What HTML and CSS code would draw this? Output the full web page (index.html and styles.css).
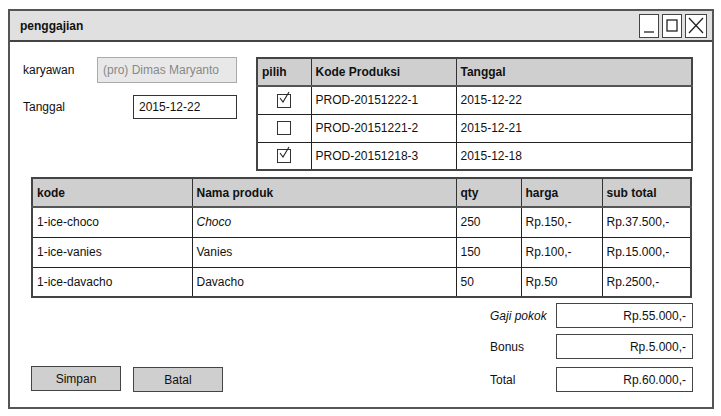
FILE: index.html
```html
<!DOCTYPE html>
<html>
<head>
<meta charset="utf-8">
<link rel="stylesheet" href="styles.css">
</head>
<body>
<div class="window">
  <div class="titlebar">
    <span class="title">penggajian</span>
    <div class="winbtns">
      <span class="wb"><svg width="18" height="21" viewBox="0 0 18 21"><line x1="4" y1="17" x2="14" y2="17" stroke="#222" stroke-width="1.3"/></svg></span>
      <span class="wb"><svg width="18" height="21" viewBox="0 0 18 21"><rect x="4" y="5" width="10" height="11" fill="none" stroke="#222" stroke-width="1.3"/></svg></span>
      <span class="wb"><svg width="20" height="21" viewBox="0 0 20 21"><path d="M3 3 L17 18 M17 3 L3 18" stroke="#222" stroke-width="1.3" fill="none"/></svg></span>
    </div>
  </div>
  <div class="content">
    <div class="top">
      <div class="form">
        <div class="frow r1">
          <span class="lbl">karyawan</span>
          <span class="input disabled">(pro) Dimas Maryanto</span>
        </div>
        <div class="frow r2">
          <span class="lbl">Tanggal</span>
          <span class="input date">2015-12-22</span>
        </div>
      </div>
      <table class="grid t1">
        <colgroup><col class="c-pilih"><col class="c-kode"><col></colgroup>
        <thead><tr><th>pilih</th><th>Kode Produksi</th><th>Tanggal</th></tr></thead>
        <tbody>
          <tr><td class="cb"><span class="check on"><svg width="13" height="13" viewBox="0 0 13 13"><path d="M2 7 L5 11 L11 1" fill="none" stroke="#222" stroke-width="1.1"/></svg></span></td><td>PROD-20151222-1</td><td>2015-12-22</td></tr>
          <tr><td class="cb"><span class="check"></span></td><td>PROD-20151221-2</td><td>2015-12-21</td></tr>
          <tr><td class="cb"><span class="check on"><svg width="13" height="13" viewBox="0 0 13 13"><path d="M2 7 L5 11 L11 1" fill="none" stroke="#222" stroke-width="1.1"/></svg></span></td><td>PROD-20151218-3</td><td>2015-12-18</td></tr>
        </tbody>
      </table>
    </div>
    <table class="grid t2">
      <colgroup><col class="c-k"><col class="c-n"><col class="c-q"><col class="c-h"><col></colgroup>
      <thead><tr><th>kode</th><th>Nama produk</th><th>qty</th><th>harga</th><th>sub total</th></tr></thead>
      <tbody>
        <tr><td>1-ice-choco</td><td><i>Choco</i></td><td>250</td><td>Rp.150,-</td><td>Rp.37.500,-</td></tr>
        <tr><td>1-ice-vanies</td><td>Vanies</td><td>150</td><td>Rp.100,-</td><td>Rp.15.000,-</td></tr>
        <tr><td>1-ice-davacho</td><td>Davacho</td><td>50</td><td>Rp.50</td><td>Rp.2500,-</td></tr>
      </tbody>
    </table>
    <div class="bottom">
      <div class="buttons">
        <span class="btn">Simpan</span>
        <span class="btn b2">Batal</span>
      </div>
      <div class="summary">
        <div class="srow"><span class="slbl"><i>Gaji pokok</i></span><span class="sbox">Rp.55.000,-</span></div>
        <div class="srow"><span class="slbl">Bonus</span><span class="sbox">Rp.5.000,-</span></div>
        <div class="srow"><span class="slbl">Total</span><span class="sbox">Rp.60.000,-</span></div>
      </div>
    </div>
  </div>
</div>
</body>
</html>
```
FILE: styles.css
```css
* { box-sizing: border-box; }
body {
  margin: 0;
  background: #fff;
  font-family: "Liberation Sans", Arial, sans-serif;
  font-size: 12px;
  color: #111;
}
.window {
  margin: 9px 0 0 8px;
  width: 706px;
  height: 400px;
  border: 2px solid #555;
  display: flex;
  flex-direction: column;
}
.titlebar {
  height: 31px;
  background: #e0e0e0;
  border-bottom: 2px solid #444;
  display: flex;
  align-items: center;
  justify-content: space-between;
  padding: 0 5px 0 10px;
}
.title { font-weight: bold; font-size: 12px; }
.winbtns { display: flex; gap: 3px; }
.wb {
  display: flex;
  border: 1.5px solid #444;
  background: #fff;
  height: 24px;
  align-items: center;
  justify-content: center;
}
.content {
  padding: 15px 0 0 0;
  display: flex;
  flex-direction: column;
}
.top { display: flex; }
.form {
  width: 246px;
  padding-left: 13px;
}
.frow { display: flex; align-items: center; justify-content: space-between; width: 214px; }
.r1 { height: 26px; }
.r2 { height: 24px; margin-top: 12px; }
.input {
  display: flex;
  align-items: center;
  border: 1.5px solid #333;
  padding-left: 5px;
  height: 100%;
}
.input.disabled {
  width: 140px;
  background: #e8e8e8;
  border-color: #aaa;
  color: #888;
}
.input.date { width: 104px; }
.grid {
  border-collapse: collapse;
  border: 2px solid #444;
  table-layout: fixed;
}
.grid th {
  background: #cfcfcf;
  font-weight: bold;
  text-align: left;
  padding: 0 4px;
  border: 1px solid #333;
  border-bottom: 2px solid #555;
}
.grid td {
  padding: 0 4px;
  border: 1px solid #222;
}
.t1 { width: 437px; }
.t1 th { height: 28px; }
.t1 td { height: 28px; }
.c-pilih { width: 54px; }
.c-kode { width: 145px; }
.cb { text-align: center; }
.check {
  display: inline-block;
  width: 14px;
  height: 14px;
  border: 1.3px solid #333;
  vertical-align: middle;
  position: relative;
}
.check svg { position: absolute; left: 0; top: -4px; }
.t2 { width: 661px; margin: 6px 0 0 21px; }
.t2 th { height: 29px; }
.t2 td { height: 30px; }
.c-k { width: 160px; }
.c-n { width: 264px; }
.c-q { width: 65px; }
.c-h { width: 81px; }
.bottom {
  display: flex;
  justify-content: space-between;
  padding: 5px 19px 0 21px;
}
.buttons { display: flex; gap: 12px; align-items: flex-start; padding-top: 63px; }
.btn {
  width: 90px;
  height: 25px;
  background: #cfcfcf;
  border: 1.5px solid #444;
  display: flex;
  align-items: center;
  justify-content: center;
}
.b2 { margin-top: 1px; }
.summary { display: flex; flex-direction: column; gap: 6px; }
.srow { display: flex; align-items: center; }
.slbl { width: 66px; }
.sbox {
  width: 137px;
  height: 25px;
  border: 1.5px solid #444;
  display: flex;
  align-items: center;
  justify-content: flex-end;
  padding-right: 6px;
}
.srow:last-child { margin-top: 2px; }
```
